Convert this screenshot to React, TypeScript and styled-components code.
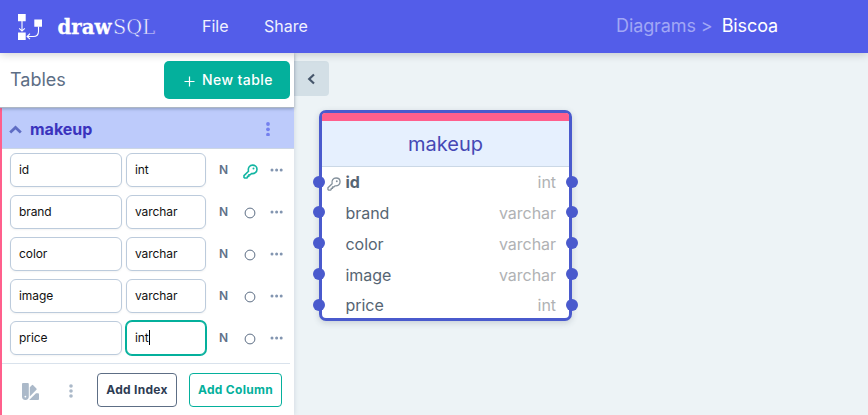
import React from "react";
import styled, { createGlobalStyle, css } from "styled-components";

const Global = createGlobalStyle`
  * { box-sizing: border-box; }
  body { margin: 0; overflow: hidden; background: #edf3f6; font-family: Inter, sans-serif; }
  button, input { font-family: inherit; }
`;

const Page = styled.div`
  height: 415px;
  display: flex;
  flex-direction: column;
`;

const TopBar = styled.header`
  height: 53px;
  flex: none;
  display: flex;
  align-items: center;
  padding-left: 17px;
  background: #535de9;
  box-shadow: 0 1px 9px rgba(0, 0, 0, 0.2);
  z-index: 3;
`;

const Brand = styled.div`
  display: flex;
  align-items: center;
  width: 185px;
`;

const Wordmark = styled.svg`
  margin-left: 14px;
  font-family: "DejaVu Serif", serif;
  fill: #fff;
`;

const NavLink = styled.a<{ $w: number }>`
  width: ${(p) => p.$w}px;
  padding-bottom: 2px;
  color: #f0f1fe;
  font-size: 16px;
  line-height: 20px;
`;

const Crumbs = styled.div`
  margin-left: auto;
  width: 252px;
  padding-bottom: 2px;
  display: flex;
  font-size: 18px;
  line-height: 20px;
  letter-spacing: -0.1px;
  color: #a1a7f5;
`;

const Current = styled.span`
  margin-left: 9px;
  color: #fff;
`;

const Main = styled.div`
  flex: 1;
  display: flex;
  min-height: 0;
`;

const Sidebar = styled.aside`
  width: 294px;
  flex: none;
  background: #fff;
  box-shadow: 0 0 5px rgba(60, 80, 110, 0.17);
  z-index: 1;
`;

const SideHead = styled.div`
  position: relative;
  height: 55px;
  display: flex;
  align-items: center;
  justify-content: space-between;
  padding: 0 4px 0 10px;
  border-bottom: 1px solid #adb7c4;
  box-shadow: 0 1px 3px rgba(50, 65, 90, 0.35);
  z-index: 1;
`;

const SideTitle = styled.h2`
  margin: 0;
  font-size: 18px;
  line-height: 22px;
  font-weight: 400;
  color: #5d6e85;
`;

const NewTable = styled.button`
  display: flex;
  align-items: center;
  width: 126px;
  height: 38px;
  padding: 0 0 1px 20px;
  border: 0;
  border-radius: 5px;
  background: #04b09c;
  color: #fff;
  font-size: 14px;
  font-weight: 500;
  letter-spacing: 0.42px;
  white-space: nowrap;
  svg { margin: 4px 7px 0 0; flex: none; }
`;

const TablePanel = styled.section`
  border-left: 2px solid #ff5f8c;
  height: 307px;
`;

const TableHead = styled.div`
  height: 41px;
  display: flex;
  align-items: center;
  padding: 2px 24px 0 7px;
  background: #bdcbfb;
  border-bottom: 1px solid #ccd6e4;
`;

const TableName = styled.h3`
  margin: 0 auto 0 8px;
  font-size: 16px;
  line-height: 20px;
  font-weight: 700;
  color: #3b33bd;
`;

const Columns = styled.div`
  padding: 4px 0 0 8px;
  display: grid;
  row-gap: 8px;
`;

const ColumnRow = styled.div`
  height: 34px;
  display: grid;
  grid-template-columns: 112px 84px 35px 18px 35px;
  align-items: center;
  > :nth-child(2) { margin-left: 4px; }
`;

const Field = styled.div<{ $active?: boolean }>`
  height: 34px;
  display: flex;
  align-items: center;
  padding: 0 0 1px 8px;
  border: 1px solid #bccbdc;
  border-radius: 6px;
  background: #fff;
  color: #111;
  font-size: 12px;
  letter-spacing: -0.08px;
  box-shadow: 0 1px 2px rgba(0, 0, 0, 0.05);
  ${(p) =>
    p.$active &&
    css`
      border-color: #04b09c;
      box-shadow: 0 0 0 1px #04b09c;
    `}
`;

const Caret = styled.span`
  width: 1px;
  height: 15px;
  background: #000;
`;

const Nullable = styled.span`
  text-align: center;
  padding-bottom: 2px;
  font-size: 12px;
  font-weight: 600;
  color: #5e7189;
`;

const IconCell = styled.span<{ $drop?: number }>`
  display: flex;
  justify-content: center;
  padding-top: ${(p) => p.$drop ?? 0}px;
`;

const PanelFoot = styled.div`
  height: 52px;
  margin: 8px 4px 0 0;
  display: flex;
  align-items: center;
  padding: 0 8px 0 20px;
  border-top: 1px solid #d9e2ec;
  svg { flex: none; }
`;

const SwatchSlot = styled.span`
  display: flex;
  padding-top: 3px;
`;

const FooterMenu = styled.span`
  display: flex;
  margin: 3px 24px 0 30px;
`;

const OutlineButton = styled.button<{ $w: number; $accent?: boolean }>`
  width: ${(p) => p.$w}px;
  height: 34px;
  padding: 0;
  border-radius: 4px;
  border: 1px solid ${(p) => (p.$accent ? "#04b09c" : "#5d6e85")};
  background: #fff;
  color: ${(p) => (p.$accent ? "#04b09c" : "#2d3c53")};
  font-size: 12px;
  font-weight: 700;
  letter-spacing: 0.3px;
  white-space: nowrap;
  & + & { margin-left: 12px; }
`;

const Canvas = styled.main`
  position: relative;
  flex: 1;
  background: #edf3f6;
`;

const Collapse = styled.button`
  display: grid;
  place-items: center;
  width: 35px;
  height: 35px;
  margin-top: 8px;
  padding: 0;
  border: 0;
  border-radius: 0 4px 4px 0;
  background: #d3dfe6;
`;

const Node = styled.article`
  position: absolute;
  left: 25px;
  top: 57px;
  width: 253px;
  height: 211px;
  border: 3px solid #4a5acd;
  border-radius: 7px;
  background: #fff;
  box-shadow: 0 2px 6px rgba(50, 65, 90, 0.2);
`;

const NodeHead = styled.div`
  height: 54px;
  padding-top: 1px;
  display: grid;
  place-items: center;
  border-top: 8px solid #ff5f8c;
  border-bottom: 1px solid #cbd8e6;
  border-radius: 3px 3px 0 0;
  background: #e6f0fe;
  color: #4548b5;
  font-size: 20px;
  line-height: 24px;
`;

const NodeRow = styled.div<{ $key?: boolean }>`
  position: relative;
  height: 30.75px;
  display: flex;
  align-items: center;
  padding: 0 13px 0 5px;
  font-size: 16px;
  letter-spacing: -0.04px;
  font-weight: ${(p) => (p.$key ? 700 : 400)};
  color: #566573;
`;

const KeySlot = styled.span`
  width: 18.5px;
  display: flex;
  padding-top: 3px;
`;

const NodeType = styled.span`
  margin-left: auto;
  color: #b0b2b4;
  font-weight: 400;
`;

const Port = styled.i<{ $right?: boolean }>`
  position: absolute;
  top: 8.5px;
  ${(p) => (p.$right ? "right: -9px;" : "left: -9.5px;")}
  width: 12px;
  height: 12px;
  border-radius: 50%;
  background: #4a5acd;
`;

const Logo = () => (
  <svg width="26" height="28" viewBox="17 13 26 28" fill="#fff">
    <path d="M18 14h7.7v7.3H18zM34.3 19.5H42v7.3h-7.7zM18 32.5h7.7V40H18z" />
    <path
      d="M22 21v9.5M19.2 28.4l2.8 2.7 2.8-2.7M38.5 26.5v4.7c0 3.5-2 5.3-5.3 5.3h-5.7M30 33.7l-2.9 2.8 2.9 2.6"
      fill="none"
      stroke="#fff"
      strokeWidth="1.1"
    />
  </svg>
);

const KeyIcon = ({ color, size = 15, weight = 1.6 }: { color: string; size?: number; weight?: number }) => (
  <svg width={size} height={size} viewBox="0 0 15 15" fill="none" stroke={color} strokeWidth={weight} strokeLinejoin="round">
    <path d="M5.5 7.2C4.7 3.8 6.6 1.1 9.7 1.1c2.5 0 4.3 1.8 4.3 4.1 0 2.8-2.4 4.8-5.5 4.3L7.3 10.7H5.9v1.5H4.5v1.2l-.6.6H1.6l-.6-.6v-1.8z" />
    <circle cx="10.5" cy="4.5" r="1" fill={color} stroke="none" />
  </svg>
);

const Swatches = () => (
  <svg width="17" height="17" viewBox="0 0 17 17" fill="#abb9c9">
    <path fillRule="evenodd" d="M1 0h4.8q1 0 1 1v12.6a3.4 3.4 0 0 1-6.8 0V1q0-1 1-1zm2.4 12.7a.9.9 0 1 0 0 1.8.9.9 0 0 0 0-1.8z" />
    <path d="M7.8 4.2l2-2q.7-.7 1.4 0l3.2 3.2q.7.7 0 1.4l-6.6 6.6z" />
    <path d="M14 10.2h2q1 0 1 1V16q0 1-1 1H7.2z" />
  </svg>
);

const Dots = ({ color, vertical, gap = 5, r = 1.6 }: { color: string; vertical?: boolean; gap?: number; r?: number }) => {
  const long = gap * 2 + 4;
  return (
    <svg width={vertical ? 4 : long} height={vertical ? long : 4} fill={color}>
      {[0, 1, 2].map((i) => (
        <circle key={i} cx={vertical ? 2 : 2 + i * gap} cy={vertical ? 2 + i * gap : 2} r={r} />
      ))}
    </svg>
  );
};

const columns = [
  { name: "id", type: "int", primary: true },
  { name: "brand", type: "varchar" },
  { name: "color", type: "varchar" },
  { name: "image", type: "varchar" },
  { name: "price", type: "int", editing: true },
];

export default function App() {
  return (
    <Page>
      <Global />
      <TopBar>
        <Brand>
          <Logo />
          <Wordmark width="100" height="30" viewBox="0 0 100 30">
            <text x="0.5" y="21.5" fontSize="20.5" fontWeight="700" textLength="54" lengthAdjust="spacingAndGlyphs" stroke="#fff" strokeWidth="0.3">draw</text>
            <text x="56" y="21.5" fontSize="20.5" textLength="42" lengthAdjust="spacingAndGlyphs" stroke="#535de9" strokeWidth="0.6">SQL</text>
          </Wordmark>
        </Brand>
        <NavLink $w={62}>File</NavLink>
        <NavLink $w={60}>Share</NavLink>
        <Crumbs>
          <span>Diagrams &gt;</span>
          <Current>Biscoa</Current>
        </Crumbs>
      </TopBar>
      <Main>
        <Sidebar>
          <SideHead>
            <SideTitle>Tables</SideTitle>
            <NewTable>
              <svg width="11" height="11" stroke="#fff" strokeWidth="1.2"><path d="M5.5 .5v10M.5 5.5h10" /></svg>
              New table
            </NewTable>
          </SideHead>
          <TablePanel>
            <TableHead>
              <svg width="13" height="9" fill="none" stroke="#5f6dc4" strokeWidth="2.8"><path d="M1.2 7.5l5.3-5 5.3 5" /></svg>
              <TableName>makeup</TableName>
              <Dots color="#7480ee" vertical gap={5.3} r={1.9} />
            </TableHead>
            <Columns>
              {columns.map((c) => (
                <ColumnRow key={c.name}>
                  <Field>{c.name}</Field>
                  <Field $active={c.editing}>
                    {c.type}
                    {c.editing && <Caret />}
                  </Field>
                  <Nullable>N</Nullable>
                  <IconCell $drop={2}>
                    {c.primary ? (
                      <KeyIcon color="#12b5a2" />
                    ) : (
                      <svg width="12" height="12" fill="none" stroke="#5d6e85"><circle cx="6" cy="6" r="4.9" /></svg>
                    )}
                  </IconCell>
                  <IconCell>
                    <Dots color="#8295b0" gap={4.6} r={1.5} />
                  </IconCell>
                </ColumnRow>
              ))}
            </Columns>
            <PanelFoot>
              <SwatchSlot><Swatches /></SwatchSlot>
              <FooterMenu><Dots color="#abb9c9" vertical gap={5} r={1.8} /></FooterMenu>
              <OutlineButton $w={80}>Add Index</OutlineButton>
              <OutlineButton $w={93} $accent>Add Column</OutlineButton>
            </PanelFoot>
          </TablePanel>
        </Sidebar>
        <Canvas>
          <Collapse>
            <svg width="9" height="12" fill="none" stroke="#46566b" strokeWidth="2.2"><path d="M7 1.5L2.2 6 7 10.5" /></svg>
          </Collapse>
          <Node>
            <NodeHead>makeup</NodeHead>
            {columns.map((c) => (
              <NodeRow key={c.name} $key={c.primary}>
                <Port />
                <KeySlot>{c.primary && <KeyIcon color="#84919c" size={14} weight={1.4} />}</KeySlot>
                {c.name}
                <NodeType>{c.type}</NodeType>
                <Port $right />
              </NodeRow>
            ))}
          </Node>
        </Canvas>
      </Main>
    </Page>
  );
}
